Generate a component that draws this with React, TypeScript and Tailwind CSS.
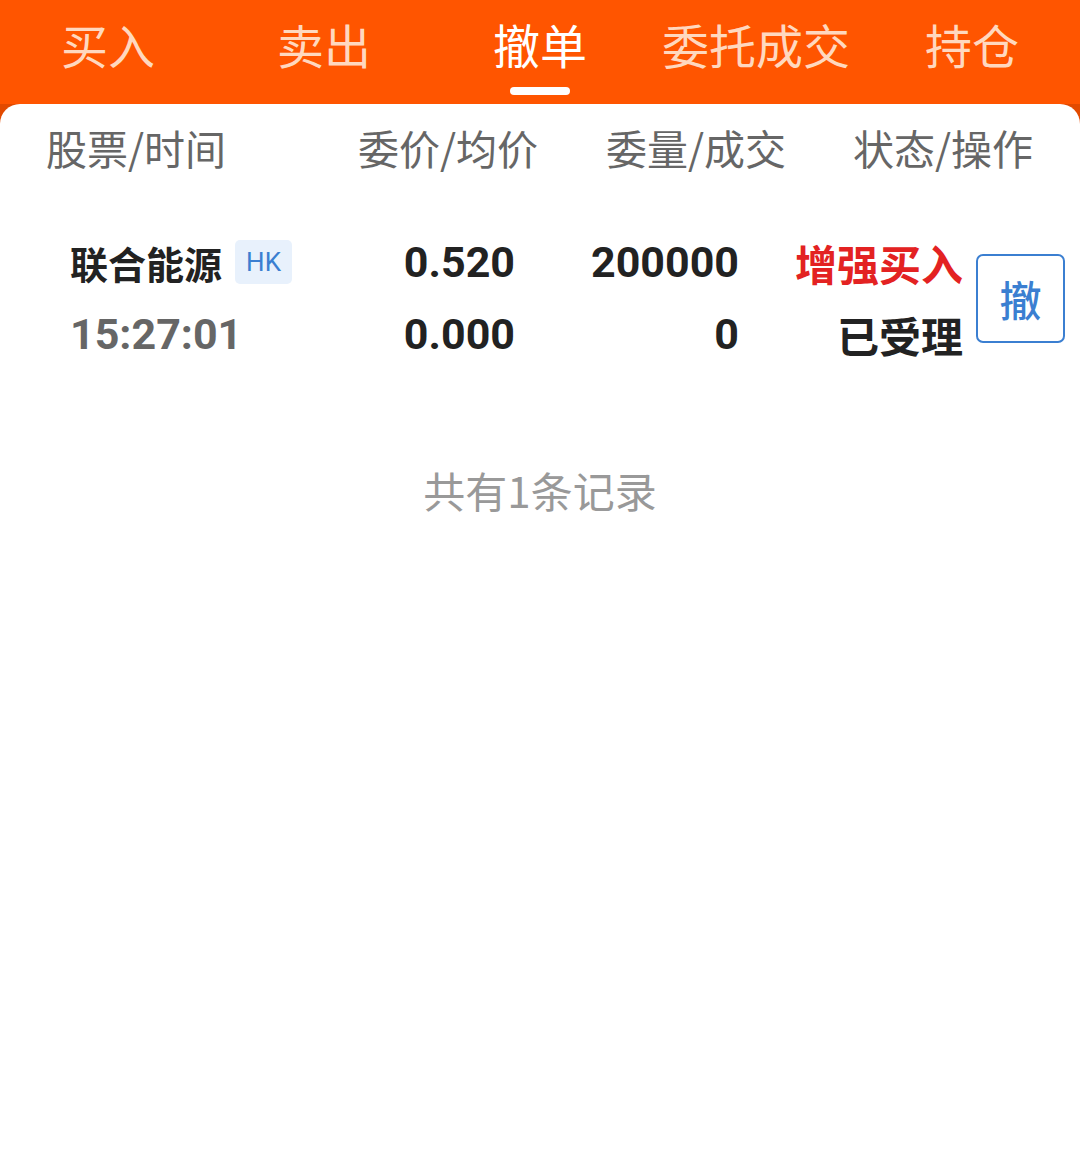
import React from "react";

const cjk = { fontFamily: '"Noto Sans CJK SC", "Noto Sans", sans-serif' };
const num = { fontFamily: 'Roboto, "Noto Sans CJK SC", sans-serif' };

export default function App() {
  const tabs = ["买入", "卖出", "撤单", "委托成交", "持仓"];
  return (
    <div className="w-[1080px] h-[1161px] bg-white overflow-hidden" style={cjk}>
      <div className="bg-[#ff5500] h-[96px] grid grid-cols-5">
        {tabs.map((t, i) => (
          <div key={t} className="flex flex-col items-center">
            <div
              className={`mt-[16px] h-[56px] leading-[56px] text-[47px] ${
                i === 2 ? "text-white" : "text-[#ffd8bf]"
              }`}
            >
              {t}
            </div>
            {i === 2 && <div className="mt-[15px] w-[60px] h-[8px] rounded-full bg-white" />}
          </div>
        ))}
      </div>
      <div className="bg-[#ff5500] h-[8px]" />
      <div className="bg-[#e24a00]">
        <div className="bg-white rounded-t-[20px] h-[1057px]">
          <div className="flex items-center h-[88px] text-[41px] text-[#666]">
            <div className="pl-[46px] w-[311px]">股票/时间</div>
            <div className="w-[227px] text-right">委价/均价</div>
            <div className="w-[248px] text-right">委量/成交</div>
            <div className="w-[247px] text-right">状态/操作</div>
          </div>
          <div className="flex items-center mt-[34px]">
            <div className="flex flex-col pl-[70px] w-[330px]">
              <div className="flex items-center h-[72px]">
                <span className="text-[38px] font-bold text-[#222]">联合能源</span>
                <span
                  className="ml-[13px] h-[44px] w-[57px] flex items-center justify-center rounded-[5px] bg-[#e8f1fc] text-[#3b7fd1] text-[26px]"
                  style={num}
                >
                  HK
                </span>
              </div>
              <div className="h-[72px] flex items-center text-[43px] font-bold text-[#666]" style={num}>
                15:27:01
              </div>
            </div>
            <div className="flex flex-col w-[185px] items-end text-[43px] font-bold text-[#222]" style={num}>
              <div className="h-[72px] flex items-center">0.520</div>
              <div className="h-[72px] flex items-center">0.000</div>
            </div>
            <div className="flex flex-col w-[224px] items-end text-[43px] font-bold text-[#222]" style={num}>
              <div className="h-[72px] flex items-center">200000</div>
              <div className="h-[72px] flex items-center">0</div>
            </div>
            <div className="flex flex-col w-[224px] items-end text-[42px] font-bold">
              <div className="h-[72px] flex items-center text-[#e32222]">增强买入</div>
              <div className="h-[72px] flex items-center text-[#222]">已受理</div>
            </div>
            <div className="ml-[13px] w-[89px] h-[89px] border-[2px] border-[#3b7fd1] rounded-[7px] flex items-center justify-center text-[42px] font-medium text-[#3b7fd1]">
              撤
            </div>
          </div>
          <div className="mt-[88px] text-center text-[42px] text-[#999]">共有1条记录</div>
        </div>
      </div>
    </div>
  );
}
